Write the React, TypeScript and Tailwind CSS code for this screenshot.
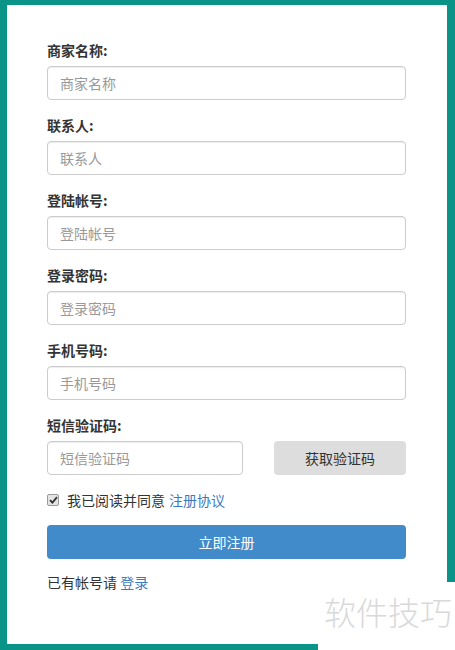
import React from "react";

const fields = ["商家名称", "联系人", "登陆帐号", "登录密码", "手机号码"];

function Field({ label }: { label: string }) {
  return (
    <div className="mb-[15px]">
      <label className="block mb-[6px] text-[14px] leading-[20px] font-bold text-[#333]">
        {label}:
      </label>
      <input
        type="text"
        placeholder={label}
        className="block w-full h-[34px] px-[12px] text-[14px] text-[#555] border border-[#ccc] rounded-[4px] bg-white shadow-[inset_0_1px_1px_rgba(0,0,0,0.075)] outline-none placeholder:text-[#999]"
      />
    </div>
  );
}

export default function App() {
  return (
    <div className="relative w-[455px] h-[650px] bg-[#0a9488] overflow-hidden font-['Noto_Sans_CJK_SC','Microsoft_YaHei',sans-serif]">
      <div className="ml-[7px] pt-[5px]">
        <div className="w-[440px] h-[639px] bg-white pt-[35px] pl-[40px] pr-[41px]">
          {fields.map((f) => (
            <Field key={f} label={f} />
          ))}
          <div className="mb-[15px]">
            <label className="block mb-[6px] text-[14px] leading-[20px] font-bold text-[#333]">
              短信验证码:
            </label>
            <div className="flex justify-between">
              <input
                type="text"
                placeholder="短信验证码"
                className="block w-[196px] h-[34px] px-[12px] text-[14px] text-[#555] border border-[#ccc] rounded-[4px] bg-white shadow-[inset_0_1px_1px_rgba(0,0,0,0.075)] outline-none placeholder:text-[#999]"
              />
              <button className="w-[132px] h-[34px] rounded-[4px] bg-[#dddddd] text-[14px] text-[#333]">
                获取验证码
              </button>
            </div>
          </div>
          <div className="flex items-center h-[20px] mb-[15px] text-[14px] text-[#333]">
            <span className="flex items-center justify-center w-[12px] h-[12px] border border-[#9a9a9a] rounded-[2px] bg-[#e4e4e4] mr-[8px]">
              <svg width="9" height="8" viewBox="0 0 9 8">
                <path d="M1 4.2 L3.4 6.6 L8 1.2" stroke="#333" strokeWidth="1.8" fill="none" />
              </svg>
            </span>
            <span>我已阅读并同意</span>
            <a className="ml-[4px] text-[#3a7bbf]">注册协议</a>
          </div>
          <button className="block w-full h-[34px] rounded-[4px] bg-[#428bca] text-white text-[14px]">
            立即注册
          </button>
          <div className="mt-[13px] text-[14px] leading-[20px] text-[#333]">
            已有帐号请 <a className="text-[#3a7bbf]">登录</a>
          </div>
        </div>
      </div>
      <div className="absolute right-0 bottom-0 w-[137px] h-[68px] bg-white flex items-start justify-end pr-[3px] pt-[13px]">
        <span className="text-[32px] leading-none font-light text-[#d9d9d9]">软件技巧</span>
      </div>
    </div>
  );
}
